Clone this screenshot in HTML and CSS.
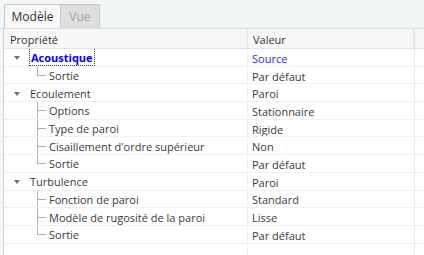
FILE: index.html
```html
<!DOCTYPE html>
<html>
<head>
<meta charset="utf-8">
<link rel="stylesheet" href="styles.css">
</head>
<body>
<div class="app">
  <div class="tabs">
    <div class="tab active">Modèle</div>
    <div class="tab disabled">Vue</div>
  </div>
  <div class="grid">
    <div class="head">
      <div class="c1">Propriété</div>
      <div class="c2">Valeur</div>
      <div class="c3"></div>
    </div>
    <div class="row">
      <div class="c1"><span class="arrow"></span><span class="name focus">Acoustique</span></div>
      <div class="c2 blue">Source</div><div class="c3"></div>
    </div>
    <div class="row">
      <div class="c1"><span class="tree last"></span><span class="name">Sortie</span></div>
      <div class="c2">Par défaut</div><div class="c3"></div>
    </div>
    <div class="row">
      <div class="c1"><span class="arrow"></span><span class="name">Ecoulement</span></div>
      <div class="c2">Paroi</div><div class="c3"></div>
    </div>
    <div class="row">
      <div class="c1"><span class="tree"></span><span class="name">Options</span></div>
      <div class="c2">Stationnaire</div><div class="c3"></div>
    </div>
    <div class="row">
      <div class="c1"><span class="tree"></span><span class="name">Type de paroi</span></div>
      <div class="c2">Rigide</div><div class="c3"></div>
    </div>
    <div class="row">
      <div class="c1"><span class="tree"></span><span class="name">Cisaillement d'ordre supérieur</span></div>
      <div class="c2">Non</div><div class="c3"></div>
    </div>
    <div class="row">
      <div class="c1"><span class="tree last"></span><span class="name">Sortie</span></div>
      <div class="c2">Par défaut</div><div class="c3"></div>
    </div>
    <div class="row">
      <div class="c1"><span class="arrow"></span><span class="name">Turbulence</span></div>
      <div class="c2">Paroi</div><div class="c3"></div>
    </div>
    <div class="row">
      <div class="c1"><span class="tree"></span><span class="name">Fonction de paroi</span></div>
      <div class="c2">Standard</div><div class="c3"></div>
    </div>
    <div class="row">
      <div class="c1"><span class="tree"></span><span class="name">Modèle de rugosité de la paroi</span></div>
      <div class="c2">Lisse</div><div class="c3"></div>
    </div>
    <div class="row">
      <div class="c1"><span class="tree last"></span><span class="name">Sortie</span></div>
      <div class="c2">Par défaut</div><div class="c3"></div>
    </div>
    <div class="filler">
      <div class="c1"></div><div class="c2"></div><div class="c3"></div>
    </div>
  </div>
</div>
</body>
</html>
```

FILE: styles.css
```css
* { box-sizing: border-box; }
html, body { margin: 0; padding: 0; }
body {
  width: 424px;
  height: 255px;
  overflow: hidden;
  background: #f2f6f7;
  font-family: "Open Sans", "Noto Sans", sans-serif;
  font-size: 11px;
  color: #3a3a3a;
}
.app {
  display: flex;
  flex-direction: column;
  height: 255px;
}
.tabs {
  display: flex;
  padding: 4px 0 0 4px;
  height: 29px;
  border-bottom: 1px solid #d9dcdd;
}
.tab {
  height: 24px;
  display: flex;
  align-items: center;
  justify-content: center;
  border: 1px solid #c9c9c9;
  border-bottom: none;
  font-size: 12px;
}
.tab.active {
  width: 57px;
  background: #f7f7f7;
  color: #333;
}
.tab.disabled {
  width: 39px;
  background: #dedede;
  color: #a5a5a5;
  border-left: none;
}
.grid {
  flex: 1;
  display: flex;
  flex-direction: column;
  background: #ffffff;
  margin-left: 3px;
  border-left: 1px solid #d4d4d4;
}
.head, .row, .filler {
  display: grid;
  grid-template-columns: 243px 168px 1fr;
}
.head {
  height: 20px;
  background: #f7f7f7;
  border-bottom: 1px solid #e3e3e3;
  color: #333;
}
.head .c1 { padding-left: 6px; }
.head .c2 { border-left: 1px solid #e2e2e2; border-right: 2px solid #e6e6e6; padding-left: 5px; }
.head > div { display: flex; align-items: center; padding-top: 1px; }
.row {
  height: 17.7px;
  border-bottom: 1px solid #f0f0f0;
}
.row > div, .filler > div { display: flex; align-items: center; white-space: nowrap; overflow: hidden; }
.row > .c1 > .name, .row > .c2 { padding-top: 2px; }
.row .c2, .filler .c2 { border-left: 1px solid #f0f0f0; border-right: 1px solid #ececec; padding-left: 4px; }
.filler { flex: 1; }
.c1 { position: relative; }
.arrow {
  width: 0; height: 0;
  margin-left: 10px;
  margin-right: 10px;
  margin-top: 2px;
  border-left: 3px solid transparent;
  border-right: 3px solid transparent;
  border-top: 4px solid #6f6f6f;
}
.tree {
  position: relative;
  width: 45px;
  align-self: stretch;
}
.tree::before {
  content: "";
  position: absolute;
  left: 33px;
  top: -1px;
  bottom: -1px;
  border-left: 1px solid #b0b0b0;
}
.tree.last::before { bottom: 50%; }
.tree::after {
  content: "";
  position: absolute;
  left: 33px;
  width: 9px;
  top: 50%;
  border-top: 1px solid #b0b0b0;
}
.name { line-height: 14px; }
.focus {
  color: #0000ff;
  font-weight: bold;
  outline: 1px dotted #444;
  outline-offset: 0;
  padding: 1px 1px 0 1px !important;
  line-height: 15px;
}
.blue { color: #2b2bff; }
```
